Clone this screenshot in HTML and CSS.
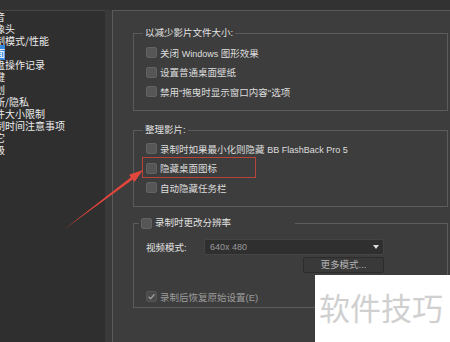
FILE: index.html
```html
<!DOCTYPE html>
<html>
<head>
<meta charset="utf-8">
<title>首选项</title>
<link rel="stylesheet" href="styles.css">
</head>
<body>
<div class="topband"></div>
<div class="main">
	<ul class="navlist">
		<li>录音</li>
		<li>摄像头</li>
		<li>录制模式/性能</li>
		<li><span class="sel">画面</span></li>
		<li>键盘操作记录</li>
		<li>热键</li>
		<li>计划</li>
		<li>更新/隐私</li>
		<li>文件大小限制</li>
		<li>录制时间注意事项</li>
		<li>其它</li>
		<li>高级</li>
	</ul>
	<div class="panel">
		<fieldset class="group g1">
			<legend>以减少影片文件大小:</legend>
			<div class="row"><span class="box"></span><span>关闭 <span class="lat">Windows</span> 图形效果</span></div>
			<div class="row"><span class="box"></span><span>设置普通桌面壁纸</span></div>
			<div class="row"><span class="box"></span><span>禁用"拖曳时显示窗口内容"选项</span></div>
		</fieldset>
		<fieldset class="group g2">
			<legend>整理影片:</legend>
			<div class="row"><span class="box"></span><span>录制时如果最小化则隐藏 <span class="lat">BB FlashBack Pro 5</span></span></div>
			<div class="row"><span class="box"></span><span>隐藏桌面图标</span></div>
			<div class="row"><span class="box"></span><span>自动隐藏任务栏</span></div>
		</fieldset>
		<fieldset class="group g3">
			<legend><span class="box"></span><span>录制时更改分辨率</span></legend>
			<div class="moderow">
				<span class="label">视频模式:</span>
				<div class="select"><span class="lat">640x 480</span><span class="caret"></span></div>
			</div>
			<div class="btn">更多模式...</div>
			<div class="row disabled">
				<span class="box checked"><svg width="9" height="9" viewBox="0 0 9 9"><polyline points="1.5,4.8 3.6,6.8 7.5,2.2" fill="none" stroke="#9a9a9a" stroke-width="1.4"/></svg></span><span>录制后恢复原始设置(E)</span>
			</div>
		</fieldset>
	</div>
</div>
<div class="mark"></div>
<svg class="arrow" width="450" height="342" viewBox="0 0 450 342">
	<polygon points="64,229.5 130.9,177.2 129.1,174.8 143,170 134.5,182 132.7,179.6" fill="#e2463c"/>
</svg>
<div class="watermark">软件技巧</div>
</body>
</html>
```

FILE: styles.css
```css
	html, body {
		margin: 0;
		padding: 0;
	}

	body {
		width: 450px;
		height: 342px;
		overflow: hidden;
		position: relative;
		background: #333333;
		font-family: "Liberation Sans", "Noto Sans CJK SC", sans-serif;
		font-size: 9.5px;
		color: #dedede;
	}

	.topband {
		height: 10px;
		background: #323232;
	}

	.main {
		display: flex;
		height: 332px;
		background: #3a3a3a;
	}

	/* left option list, cropped at the window edge */
	.navlist {
		list-style: none;
		margin: 0;
		padding: 0;
		width: 105px;
		flex: none;
		background: #2f2f2f;
		border-top: 1px solid #464646;
		overflow: hidden;
		font-family: "Noto Sans CJK SC", sans-serif;
		font-size: 10px;
		line-height: 12.1px;
		color: #ececec;
	}

	.navlist li {
		height: 12.1px;
		margin-left: -15px;
		white-space: nowrap;
	}

	.navlist .sel {
		background: #3587dc;
		color: #ffffff;
	}

	.panel {
		flex: none;
		width: 400px;
		margin-left: 7px;
		background: #3d3d3d;
		border-top: 1px solid #5a5a5a;
		border-left: 1px solid #5a5a5a;
	}

	.group {
		box-sizing: border-box;
		width: 315px;
		margin: 0 0 0 20px;
		padding: 0 12px;
		border: 1px solid #5c5c5c;
		min-inline-size: 0;
	}

	.group legend {
		margin-left: -3px;
		padding: 0 2px;
		line-height: 12px;
		height: 12px;
		color: #e2e2e2;
	}

	.g1 {
		margin-top: 16px;
		padding-top: 4px;
		padding-bottom: 8.5px;
	}

	.g2 {
		margin-top: 13px;
		padding-top: 3px;
		padding-bottom: 8.5px;
	}

	.g3 {
		margin-top: 10px;
		padding-top: 10px;
		padding-bottom: 0.5px;
	}

	.g3 legend {
		margin-left: -7px;
		width: 156px;
		box-sizing: border-box;
		display: flex;
		align-items: center;
	}

	.row {
		height: 19.5px;
		display: flex;
		align-items: center;
		white-space: nowrap;
	}

	.lat {
		font-size: 9px;
	}

	.box {
		box-sizing: border-box;
		width: 11px;
		height: 11px;
		flex: none;
		margin-right: 3px;
		background: #565656;
		border: 1px solid #626262;
		border-radius: 2px;
		display: flex;
		align-items: center;
		justify-content: center;
	}

	.box.checked {
		background: #4a4a4a;
		border-color: #555555;
	}

	.disabled {
		color: #9c9c9c;
		margin-top: 14px;
	}

	.moderow {
		display: flex;
		align-items: center;
		height: 16px;
	}

	.moderow .label {
		width: 58px;
		flex: none;
		color: #e4e4e4;
	}

	.select {
		box-sizing: border-box;
		width: 180px;
		height: 16px;
		background: #2f2f2f;
		border: 1px solid #444444;
		border-radius: 2px;
		display: flex;
		align-items: center;
		justify-content: space-between;
		padding: 0 4px 0 5px;
		color: #9a9a9a;
	}

	.caret {
		width: 0;
		height: 0;
		border-top: 4px solid #dddddd;
		border-left: 3px solid transparent;
		border-right: 3px solid transparent;
	}

	.btn {
		box-sizing: border-box;
		width: 81px;
		height: 16px;
		margin: 2px 0 0 157px;
		background: #393939;
		border: 1px solid #2c2c2c;
		border-radius: 2px;
		text-align: center;
		line-height: 14px;
		color: #b4b4b4;
	}

	/* annotation overlays */
	.mark {
		position: absolute;
		left: 142px;
		top: 157px;
		width: 112px;
		height: 19px;
		border: 1px solid #b8433b;
	}

	.arrow {
		position: absolute;
		left: 0;
		top: 0;
	}

	.watermark {
		position: absolute;
		left: 315px;
		top: 275px;
		width: 135px;
		height: 67px;
		box-sizing: border-box;
		padding: 16px 0 0 4px;
		background: #ffffff;
		font-family: "Noto Sans CJK SC", sans-serif;
		font-size: 31px;
		line-height: 31px;
		color: #d0d0d0;
		white-space: nowrap;
	}
```
